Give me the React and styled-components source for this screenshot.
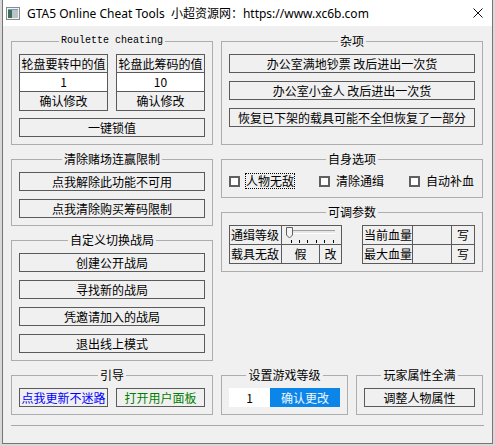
import React from "react";
import styled, { createGlobalStyle, css } from "styled-components";

const GlobalStyle = createGlobalStyle`
  html, body {
    margin: 0;
    padding: 0;
    background: #d8d8d8;
  }
  body {
    font-family: "Noto Sans CJK SC", "Noto Sans", sans-serif;
    font-size: 12px;
    color: #000;
  }
`;

const CJK = `"Noto Sans CJK SC", "Noto Sans", sans-serif`;

const Window = styled.div`
  box-sizing: border-box;
  width: 491px;
  height: 444px;
  margin-left: 2px;
  border: 1px solid #767676;
  border-top: none;
  background: #f0f0f0;
  display: flex;
  flex-direction: column;
`;

const TitleBar = styled.div`
  height: 26px;
  flex: none;
  background: #fff;
  display: flex;
  align-items: center;
  padding: 0 9px 0 3px;
`;

const TitleText = styled.span`
  margin-left: 7px;
  font-family: "Noto Sans", ${CJK};
  font-size: 12px;
  white-space: pre;
  flex: 1;
`;

const Client = styled.div`
  flex: 1;
  padding: 8px 8px 0;
  display: flex;
  flex-direction: column;
`;

const Layout = styled.div`
  display: grid;
  grid-template-columns: 202px 262px;
  column-gap: 8px;
  row-gap: 7px;
`;

const Stack = styled.div`
  display: flex;
  flex-direction: column;
  gap: 7px;
`;

const Pair = styled.div`
  display: flex;
  gap: 8px;
  & > * {
    width: 127px;
  }
`;

const Fieldset = styled.fieldset`
  box-sizing: border-box;
  margin: 0;
  min-width: 0;
  border: 1px solid #adadad;
  padding: 6px 7px 7px;
`;

const Legend = styled.legend`
  margin: 0 auto;
  padding: 0 2px;
  line-height: 14px;
  font-size: 12px;
  font-family: ${CJK};
  ${p => p.$mono && css`
    font-family: "Liberation Mono", monospace;
    font-size: 10px;
  `}
`;

const Button = styled.button`
  display: block;
  box-sizing: border-box;
  width: 100%;
  height: 19px;
  padding: 0;
  border: 1px solid #5a5a5a;
  background: #f0f0f0;
  font-family: ${CJK};
  font-size: 12px;
  line-height: 17px;
  color: ${p => p.$color || "#000"};
`;

const ButtonList = styled.div`
  display: flex;
  flex-direction: column;
  gap: 8px;
`;

const TwoCols = styled.div`
  display: flex;
  gap: 8px;
  margin-bottom: 7px;
`;

const ValueTable = styled.div`
  flex: 1;
  display: grid;
  grid-template-rows: 17px 18px 18px;
  gap: 1px;
  background: #5a5a5a;
  border: 1px solid #5a5a5a;
`;

const Cell = styled.div`
  background: ${p => (p.$white ? "#fff" : "#f0f0f0")};
  text-align: ${p => (p.$left ? "left" : "center")};
  padding-left: ${p => (p.$left ? "1px" : "0")};
  line-height: 17px;
  font-family: ${CJK};
  font-size: 12px;
  white-space: nowrap;
  overflow: hidden;
  ${p => p.$span && css`grid-column: span ${p.$span};`}
`;

const ParamTables = styled.div`
  display: flex;
  justify-content: space-between;
`;

const ParamTable = styled.div`
  display: grid;
  grid-template-columns: ${p => p.$cols};
  grid-template-rows: 18px 18px;
  gap: 1px;
  background: #5a5a5a;
  border: 1px solid #5a5a5a;
`;

const CheckRow = styled.div`
  height: 18px;
  display: flex;
  align-items: center;
  gap: 25px;
`;

const CheckItem = styled.label`
  display: flex;
  align-items: center;
  gap: 6px;
  line-height: 14px;
`;

const Box = styled.span`
  box-sizing: border-box;
  width: 11px;
  height: 11px;
  border: 2px solid #606060;
  background: #fff;
`;

const CheckLabel = styled.span`
  outline: ${p => (p.$focus ? "1px dotted #000" : "none")};
  outline-offset: 0;
`;

const StatusBar = styled.div`
  margin-top: auto;
  height: 17px;
  border-top: 1px solid #a8a8a8;
`;

const LevelRow = styled.div`
  display: flex;
  height: 19px;
`;

const LevelInput = styled.div`
  width: 41px;
  background: #fff;
  text-align: center;
  line-height: 19px;
  font-family: ${CJK};
`;

const BlueButton = styled.div`
  width: 70px;
  background: #0b86e8;
  color: #eef6ff;
  text-align: center;
  line-height: 19px;
  font-family: ${CJK};
`;

function AppIcon() {
  return (
    <svg width="14" height="13" viewBox="0 0 14 13">
      <rect x="0.5" y="0.5" width="13" height="12" fill="#f4f4f4" stroke="#8a8a8a" />
      <rect x="2" y="2" width="4" height="9" fill="#3f6f5c" />
      <rect x="6" y="2" width="6" height="9" fill="#b9c3c8" />
      <rect x="2" y="2" width="10" height="1" fill="#6aa0c8" />
    </svg>
  );
}

function CloseIcon() {
  return (
    <svg width="10" height="10" viewBox="0 0 10 10">
      <path d="M0.5 0.5 L9.5 9.5 M9.5 0.5 L0.5 9.5" stroke="#111" strokeWidth="1" />
    </svg>
  );
}

function Slider() {
  const ticks = [9, 17, 25, 34, 42, 51];
  return (
    <svg width="59" height="18" viewBox="0 0 59 18">
      <rect x="6" y="4" width="47" height="1" fill="#a0a0a0" />
      <rect x="6" y="5" width="47" height="2" fill="#e6e6e6" />
      <rect x="6" y="7" width="47" height="1" fill="#fff" />
      <path d="M4.5 1.5 H10.5 V9 L7.5 12 L4.5 9 Z" fill="#f4f4f4" stroke="#606060" />
      {ticks.map(x => (
        <rect key={x} x={x} y="14" width="1" height="3" fill="#000" />
      ))}
    </svg>
  );
}

function Group({ title, mono, children }) {
  return (
    <Fieldset>
      <Legend $mono={mono}>{title}</Legend>
      {children}
    </Fieldset>
  );
}

export default function App() {
  return (
    <>
      <GlobalStyle />
      <Window>
        <TitleBar>
          <AppIcon />
          <TitleText>GTA5 Online Cheat Tools  小超资源网：https://www.xc6b.com</TitleText>
          <CloseIcon />
        </TitleBar>
        <Client>
          <Layout>
            <Group title="Roulette cheating" mono>
              <TwoCols>
                <ValueTable>
                  <Cell>轮盘要转中的值</Cell>
                  <Cell $white>1</Cell>
                  <Cell>确认修改</Cell>
                </ValueTable>
                <ValueTable>
                  <Cell>轮盘此筹码的值</Cell>
                  <Cell $white>10</Cell>
                  <Cell>确认修改</Cell>
                </ValueTable>
              </TwoCols>
              <Button>一键锁值</Button>
            </Group>

            <Group title="杂项">
              <ButtonList>
                <Button>办公室满地钞票 改后进出一次货</Button>
                <Button>办公室小金人 改后进出一次货</Button>
                <Button>恢复已下架的载具可能不全但恢复了一部分</Button>
              </ButtonList>
            </Group>

            <Stack>
              <Group title="清除赌场连赢限制">
                <ButtonList>
                  <Button>点我解除此功能不可用</Button>
                  <Button>点我清除购买筹码限制</Button>
                </ButtonList>
              </Group>
              <Group title="自定义切换战局">
                <ButtonList>
                  <Button>创建公开战局</Button>
                  <Button>寻找新的战局</Button>
                  <Button>凭邀请加入的战局</Button>
                  <Button>退出线上模式</Button>
                </ButtonList>
              </Group>
            </Stack>

            <Stack>
              <Group title="自身选项">
                <CheckRow>
                  <CheckItem>
                    <Box />
                    <CheckLabel $focus>人物无敌</CheckLabel>
                  </CheckItem>
                  <CheckItem>
                    <Box />
                    <CheckLabel>清除通缉</CheckLabel>
                  </CheckItem>
                  <CheckItem>
                    <Box />
                    <CheckLabel>自动补血</CheckLabel>
                  </CheckItem>
                </CheckRow>
              </Group>
              <Group title="可调参数">
                <ParamTables>
                  <ParamTable $cols="51px 37px 21px">
                    <Cell $left>通缉等级</Cell>
                    <Cell $span={2}>
                      <Slider />
                    </Cell>
                    <Cell $left>载具无敌</Cell>
                    <Cell>假</Cell>
                    <Cell>改</Cell>
                  </ParamTable>
                  <ParamTable $cols="49px 38px 22px">
                    <Cell $left>当前血量</Cell>
                    <Cell />
                    <Cell>写</Cell>
                    <Cell $left>最大血量</Cell>
                    <Cell />
                    <Cell>写</Cell>
                  </ParamTable>
                </ParamTables>
              </Group>
            </Stack>

            <Group title="引导">
              <TwoCols style={{ marginBottom: 0 }}>
                <Button $color="#0000ff">点我更新不迷路</Button>
                <Button $color="#008000">打开用户面板</Button>
              </TwoCols>
            </Group>

            <Pair>
              <Group title="设置游戏等级">
                <LevelRow>
                  <LevelInput>1</LevelInput>
                  <BlueButton>确认更改</BlueButton>
                </LevelRow>
              </Group>
              <Group title="玩家属性全满">
                <Button>调整人物属性</Button>
              </Group>
            </Pair>
          </Layout>
          <StatusBar />
        </Client>
      </Window>
    </>
  );
}
